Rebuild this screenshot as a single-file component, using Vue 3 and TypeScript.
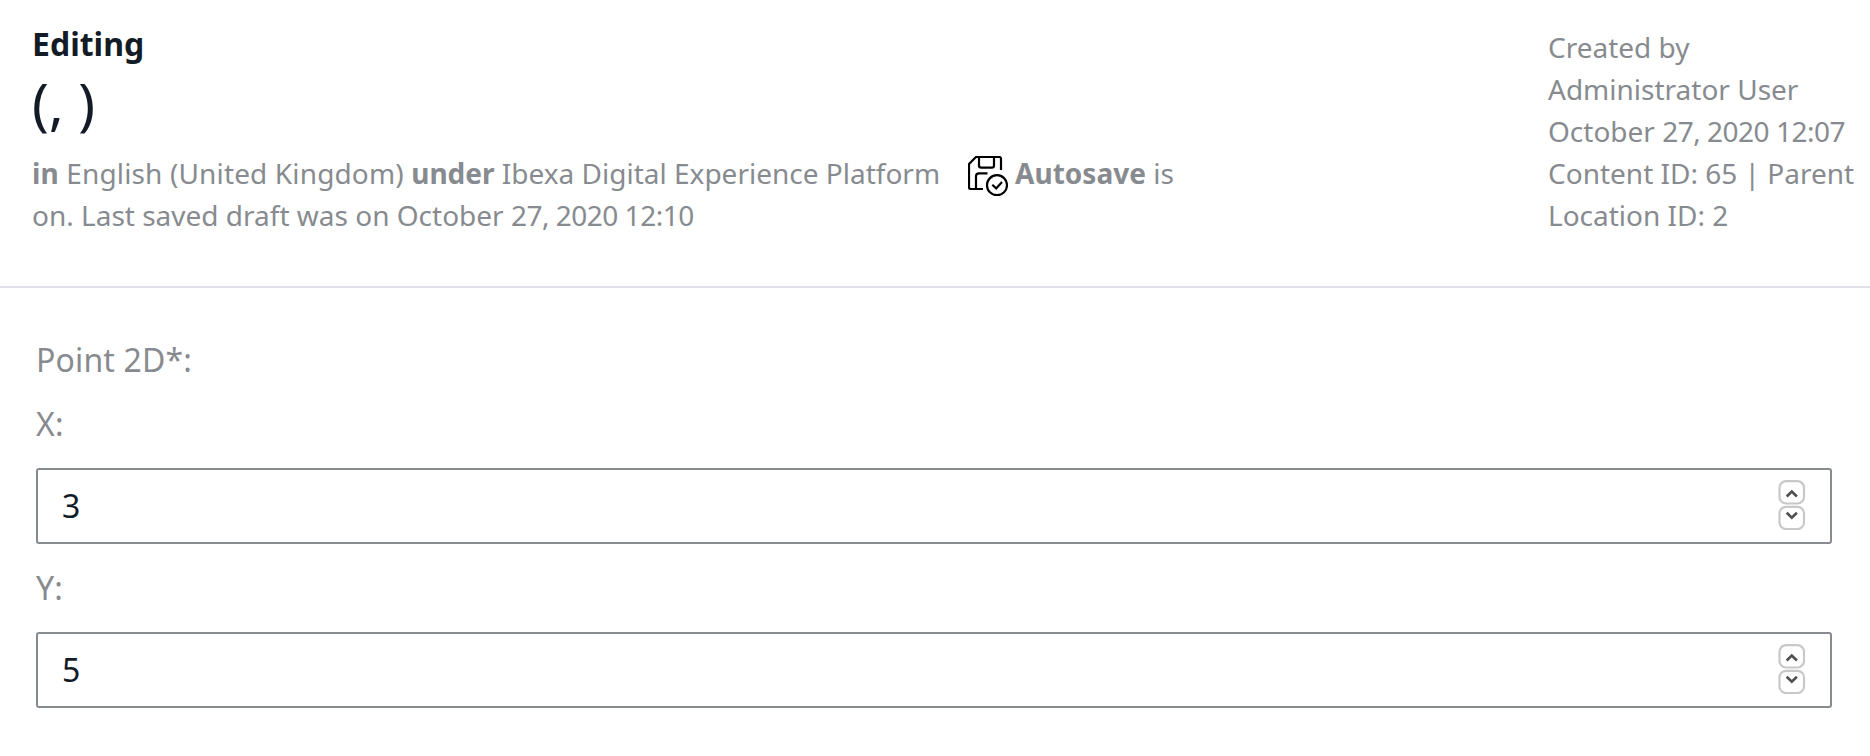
<script setup lang="ts">
import { reactive } from 'vue'

interface Coordinate {
  name: string
  value: number
}

const coordinates = reactive<Coordinate[]>([
  { name: 'X', value: 3 },
  { name: 'Y', value: 5 },
])
</script>

<template>
  <div class="page">
    <header class="header">
      <div class="summary">
        <div class="action">Editing</div>
        <h1 class="title">(, )</h1>
        <div class="meta">
          <div class="meta-line">
            <span><span class="language"><b>in</b> English (United Kingdom) </span><b>under</b> Ibexa Digital Experience Platform</span>
            <svg class="save-icon" width="40" height="40" viewBox="0 0 40 40" fill="none" stroke="#000" stroke-width="2.2">
              <path d="M15 33H2.8Q1 33 1 31.2V8L8 1H31.2Q33 1 33 2.8V14" />
              <path d="M11 1V9.5Q11 11.7 13.3 11.7H23.8Q26 11.7 26 9.5V1" />
              <path d="M8 33V20.3Q8 17.3 11 17.3H19.5" />
              <circle cx="29" cy="29.2" r="10" />
              <path d="M24.3 28.8L28.2 32.4L34 26" />
            </svg>
            <span><b>Autosave</b> is</span>
          </div>
          <div>on. Last saved draft was on October <span class="date">27, 2020 12:10</span></div>
        </div>
      </div>
      <div class="details">
        <div>Created by</div>
        <div>Administrator User</div>
        <div>October <span class="date">27, 2020 12:07</span></div>
        <div>Content ID: 65 | Parent</div>
        <div>Location ID: 2</div>
      </div>
    </header>
    <main class="form">
      <div class="label group-label">Point 2D*:</div>
      <div v-for="c in coordinates" :key="c.name" class="field">
        <div class="label">{{ c.name }}:</div>
        <div class="input">
          <span>{{ c.value }}</span>
          <div class="spinner">
            <button type="button" @click="c.value++">
              <svg width="28" height="25" viewBox="0 0 28 25" fill="none">
                <rect x="1.5" y="1.2" width="24.5" height="22.3" rx="6.5" stroke="#c8c8c8" stroke-width="2.2" />
                <path d="M8.7 16.5L13.8 11.6L18.9 16.5" stroke="#505050" stroke-width="2.6" />
              </svg>
            </button>
            <button type="button" @click="c.value--">
              <svg width="28" height="25" viewBox="0 0 28 25" fill="none">
                <rect x="1.5" y="1.8" width="24.5" height="22.2" rx="6.5" stroke="#c8c8c8" stroke-width="2.2" />
                <path d="M8.7 7.7L13.8 12.6L18.9 7.7" stroke="#505050" stroke-width="2.6" />
              </svg>
            </button>
          </div>
        </div>
      </div>
    </main>
  </div>
</template>

<style>
body {
  background: #fff;
}
</style>

<style scoped>
.page {
  box-sizing: border-box;
  height: 756px;
  overflow: hidden;
  background: #fff;
  color: #878b90;
  font-family: "Noto Sans", sans-serif;
  font-size: 28px;
  line-height: 42px;
}
.header {
  display: flex;
  justify-content: space-between;
  box-sizing: border-box;
  height: 288px;
  padding: 20px 0 0 32px;
  border-bottom: 2px solid #e0e0e8;
  white-space: nowrap;
}
.action {
  color: #131c26;
  font-size: 32px;
  font-weight: 700;
  line-height: 48px;
}
.title {
  margin: 0;
  height: 84px;
  color: #131c26;
  font-size: 56px;
  font-weight: 400;
  line-height: 70px;
}
.meta-line {
  display: flex;
  height: 42px;
}
.language {
  letter-spacing: 0.14px;
}
.date {
  letter-spacing: -0.5px;
}
.save-icon {
  margin: 4px 7px 0 28px;
}
.details {
  width: 322px;
  padding-top: 6px;
}
.form {
  padding: 48px 38px 0 36px;
}
.label {
  font-size: 32px;
  line-height: 48px;
  letter-spacing: 0.14px;
}
.group-label {
  margin-bottom: 16px;
}
.field {
  margin-bottom: 20px;
}
.input {
  display: flex;
  align-items: center;
  justify-content: space-between;
  box-sizing: border-box;
  height: 76px;
  margin-top: 20px;
  padding: 0 24px;
  border: 2px solid #878b90;
  border-radius: 3px;
  color: #131c26;
  font-size: 32px;
  line-height: 48px;
}
.spinner {
  display: flex;
  flex-direction: column;
  padding-bottom: 2px;
}
.spinner button {
  display: block;
  height: 25px;
  padding: 0;
  border: 0;
  background: none;
}
.spinner svg {
  display: block;
}
</style>
